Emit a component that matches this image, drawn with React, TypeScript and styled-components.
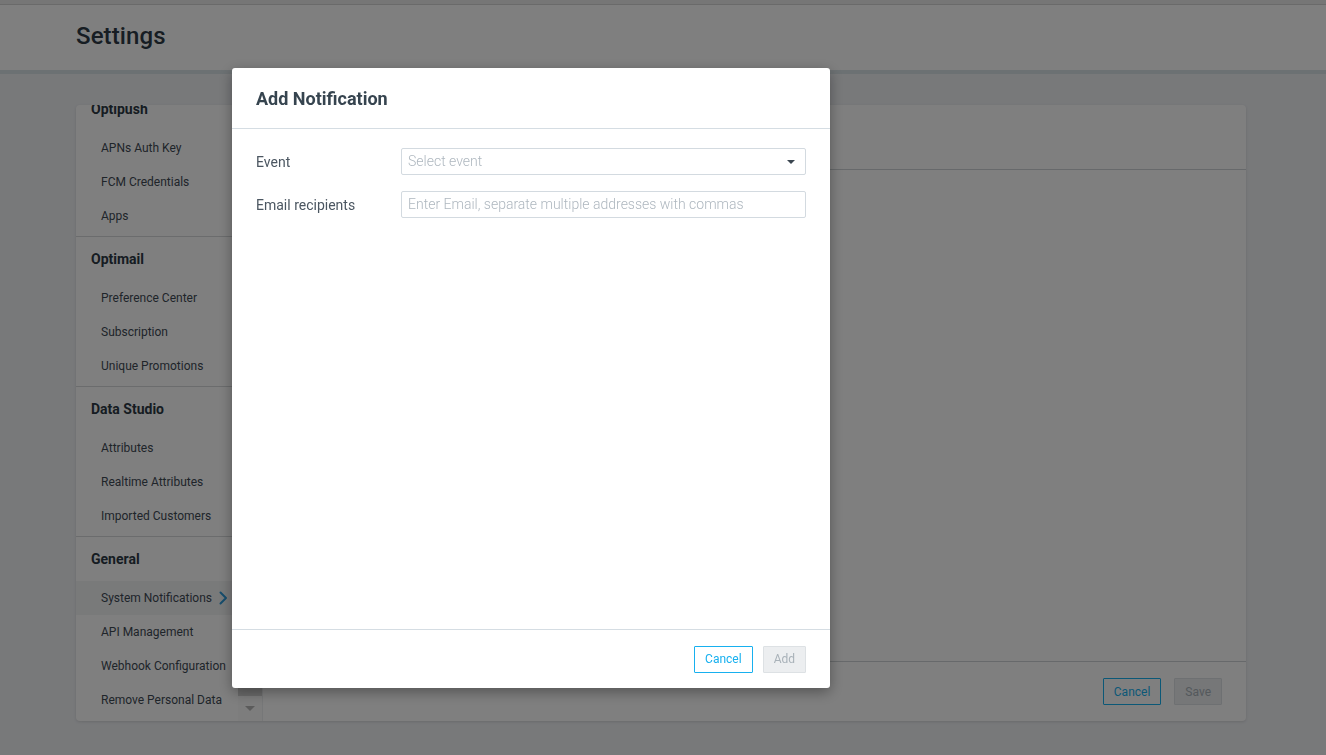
import React, { useLayoutEffect, useRef } from "react";
import styled, { createGlobalStyle } from "styled-components";

const GlobalStyle = createGlobalStyle`
  html, body { margin: 0; padding: 0; }
  body {
    font-family: Roboto, "Liberation Sans", Arial, sans-serif;
    background: #f0f2f5;
    color: #34424d;
    overflow: hidden;
  }
  * { box-sizing: border-box; }
`;

const Page = styled.div`
  min-height: 100vh;
  display: flex;
  flex-direction: column;
`;

const TopStrip = styled.div`
  height: 5px;
  background: #ececec;
  border-bottom: 1px solid #d4d4d4;
`;

const Header = styled.header`
  height: 69px;
  background: #ffffff;
  border-bottom: 4px solid #d9e2e6;
  display: flex;
  align-items: center;
  padding: 0 0 3px 76px;
`;

const PageTitle = styled.h1`
  margin: 0;
  font-size: 24px;
  font-weight: 500;
  color: #2e3b46;
  letter-spacing: 0.1px;
`;

const Main = styled.main`
  padding: 31px 80px 0 76px;
`;

const Card = styled.div`
  height: 616px;
  background: #ffffff;
  border-radius: 4px;
  box-shadow: 0 1px 3px rgba(0, 0, 0, 0.12);
  display: flex;
  overflow: hidden;
`;

const Sidebar = styled.nav`
  width: 186px;
  flex: none;
  display: flex;
`;

const NavList = styled.div`
  flex: 1;
  min-width: 0;
  overflow: hidden;
`;

const ScrollRail = styled.div`
  width: 24px;
  flex: none;
  background: #fafafa;
  display: flex;
  flex-direction: column;
`;

const ScrollThumb = styled.div`
  flex: 1;
  margin-top: 18px;
  background: #d4d4d4;
`;

const ScrollButton = styled.div`
  height: 25px;
  display: flex;
  align-items: center;
  justify-content: center;
`;

const ScrollArrow = styled.span<{ $up?: boolean }>`
  width: 0;
  height: 0;
  border-left: 5.5px solid transparent;
  border-right: 5.5px solid transparent;
  ${(p) => (p.$up ? "border-bottom: 5px solid #b6b6b6;" : "border-top: 5px solid #b6b6b6;")}
`;

const Section = styled.div<{ $last?: boolean }>`
  padding-bottom: ${(p) => (p.$last ? "4px" : "3px")};
  border-bottom: ${(p) => (p.$last ? "none" : "1px solid #d6d8da")};
`;

const SectionTitle = styled.div`
  height: 44px;
  display: flex;
  align-items: center;
  padding-left: 15px;
  font-size: 14px;
  font-weight: 700;
  color: #2c3944;
`;

const NavItem = styled.div<{ $active?: boolean }>`
  height: 34px;
  display: flex;
  align-items: center;
  padding-left: 25px;
  font-size: 12px;
  color: #3f4a55;
  background: ${(p) => (p.$active ? "#f3f4f5" : "transparent")};
  white-space: nowrap;
  gap: 6px;
`;

const Content = styled.section`
  flex: 1;
  display: flex;
  flex-direction: column;
  border-left: 1px solid #eceef0;
`;

const ContentHeader = styled.div`
  height: 65px;
  border-bottom: 1px solid #cfd3d6;
`;

const ContentBody = styled.div`
  flex: 1;
`;

const ContentFooter = styled.div`
  height: 60px;
  border-top: 1px solid #cfd3d6;
  display: flex;
  align-items: center;
  justify-content: flex-end;
  gap: 13px;
  padding: 0 24px 0 0;
`;

const Button = styled.button<{ $variant: "outline" | "disabled" }>`
  height: 27px;
  padding: 0 10px;
  font-family: Roboto, "Liberation Sans", Arial, sans-serif;
  font-size: 12px;
  border-radius: 1px;
  cursor: pointer;
  border: 1px solid ${(p) => (p.$variant === "outline" ? "#17b0ef" : "#dde1e4")};
  color: ${(p) => (p.$variant === "outline" ? "#17b0ef" : "#a9b2b9")};
  background: ${(p) => (p.$variant === "outline" ? "#ffffff" : "#eceef0")};
`;

const Overlay = styled.div`
  position: fixed;
  inset: 0;
  background: rgba(0, 0, 0, 0.5);
  padding: 68px 0 0 232px;
`;

const Modal = styled.div`
  width: 598px;
  height: 620px;
  background: #ffffff;
  border-radius: 3px;
  box-shadow: 0 4px 14px rgba(0, 0, 0, 0.35);
  display: flex;
  flex-direction: column;
`;

const ModalHeader = styled.div`
  height: 61px;
  border-bottom: 1px solid #d5dde3;
  display: flex;
  align-items: center;
  padding: 0 24px;
`;

const ModalTitle = styled.h2`
  margin: 0;
  font-size: 18px;
  font-weight: 700;
  color: #36444f;
`;

const ModalBody = styled.div`
  flex: 1;
  padding: 19px 24px 0;
  display: flex;
  flex-direction: column;
  gap: 16px;
`;

const FormRow = styled.div`
  display: grid;
  grid-template-columns: 145px 405px;
  align-items: center;
`;

const Label = styled.label`
  font-size: 14px;
  color: #4b5661;
`;

const Field = styled.div`
  height: 27px;
  border: 1px solid #d3dae0;
  border-radius: 2px;
  display: flex;
  align-items: center;
  justify-content: space-between;
  padding: 0 10px 2px 6px;
  font-size: 14px;
  font-weight: 300;
  color: #aeb7bf;
`;

const Caret = styled.span`
  width: 0;
  height: 0;
  border-left: 4px solid transparent;
  border-right: 4px solid transparent;
  border-top: 4px solid #3b4650;
  margin-top: 2px;
`;

const ModalFooter = styled.div`
  height: 59px;
  border-top: 1px solid #d5dde3;
  display: flex;
  align-items: center;
  justify-content: flex-end;
  gap: 10px;
  padding: 0 24px 0 0;
`;

const sections: { title: string; items: string[] }[] = [
  { title: "Optipush", items: ["APNs Auth Key", "FCM Credentials", "Apps"] },
  { title: "Optimail", items: ["Preference Center", "Subscription", "Unique Promotions"] },
  { title: "Data Studio", items: ["Attributes", "Realtime Attributes", "Imported Customers"] },
  {
    title: "General",
    items: ["System Notifications", "API Management", "Webhook Configuration", "Remove Personal Data"],
  },
];

const Chevron = () => (
  <svg width="10" height="14" viewBox="0 0 10 14" fill="none">
    <path d="M2.5 1.5 L8 7 L2.5 12.5" stroke="#2d9ad8" strokeWidth="2" strokeLinecap="round" strokeLinejoin="round" />
  </svg>
);

export default function App() {
  const navRef = useRef<HTMLDivElement>(null);
  useLayoutEffect(() => {
    if (navRef.current) navRef.current.scrollTop = navRef.current.scrollHeight;
  }, []);

  return (
    <>
      <GlobalStyle />
      <Page>
        <TopStrip />
        <Header>
          <PageTitle>Settings</PageTitle>
        </Header>
        <Main>
          <Card>
            <Sidebar>
              <NavList ref={navRef}>
                {sections.map((s, i) => (
                  <Section key={s.title} $last={i === sections.length - 1}>
                    <SectionTitle>{s.title}</SectionTitle>
                    {s.items.map((it) => (
                      <NavItem key={it} $active={it === "System Notifications"}>
                        {it}
                        {it === "System Notifications" && <Chevron />}
                      </NavItem>
                    ))}
                  </Section>
                ))}
              </NavList>
              <ScrollRail>
                <ScrollButton>
                  <ScrollArrow $up />
                </ScrollButton>
                <ScrollThumb />
                <ScrollButton>
                  <ScrollArrow />
                </ScrollButton>
              </ScrollRail>
            </Sidebar>
            <Content>
              <ContentHeader />
              <ContentBody />
              <ContentFooter>
                <Button $variant="outline">Cancel</Button>
                <Button $variant="disabled">Save</Button>
              </ContentFooter>
            </Content>
          </Card>
        </Main>
      </Page>
      <Overlay>
        <Modal>
          <ModalHeader>
            <ModalTitle>Add Notification</ModalTitle>
          </ModalHeader>
          <ModalBody>
            <FormRow>
              <Label>Event</Label>
              <Field>
                <span>Select event</span>
                <Caret />
              </Field>
            </FormRow>
            <FormRow>
              <Label>Email recipients</Label>
              <Field>
                <span>Enter Email, separate multiple addresses with commas</span>
              </Field>
            </FormRow>
          </ModalBody>
          <ModalFooter>
            <Button $variant="outline">Cancel</Button>
            <Button $variant="disabled">Add</Button>
          </ModalFooter>
        </Modal>
      </Overlay>
    </>
  );
}
